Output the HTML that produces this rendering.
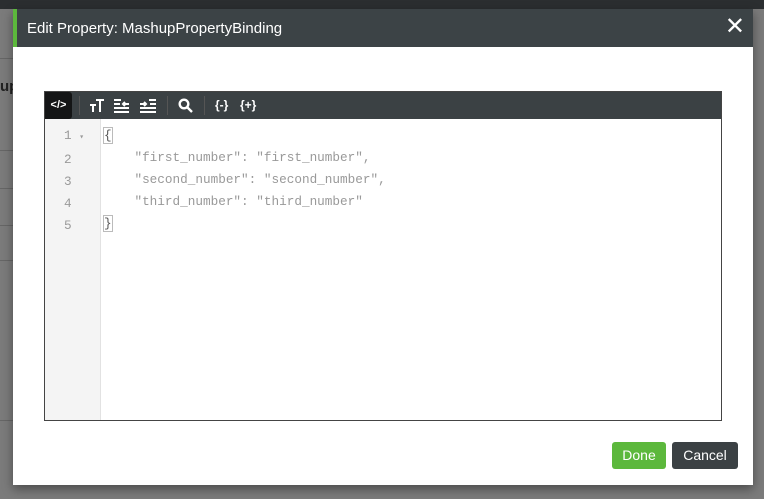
<!DOCTYPE html>
<html><head><meta charset="utf-8"><style>
*{box-sizing:border-box;margin:0;padding:0}
body{width:764px;height:499px;overflow:hidden;background:#7b7b7b;font-family:"Liberation Sans",sans-serif;position:relative}
.top{position:absolute;left:0;top:0;width:764px;height:9px;background:#2b2e30}
.line{position:absolute;left:0;width:13px;height:1px;background:#666}
.modal{position:absolute;left:13px;top:9px;width:740px;height:476px;background:#fff;box-shadow:0 4px 10px rgba(0,0,0,.4)}
.hdr{height:38px;background:#3c4346;border-left:4px solid #5cb83c;color:#fff;font-size:15px;padding:11px 0 0 10px;position:relative}
.x{position:absolute;right:8px;top:6px;font-size:24px;color:#fff;line-height:24px}
.ed{position:absolute;left:31px;top:82px;width:678px;height:330px;border:1px solid #444}
.tb{height:27px;background:#3b4144;position:relative}
.tb .a{position:absolute;left:0;top:0;width:27px;height:27px;background:#141516;border-radius:0 3px 3px 0;color:#fff;font-size:11px;font-weight:bold;text-align:center;line-height:27px}
.tb span{position:absolute;top:0;color:#fff;line-height:27px;font-size:14px;font-weight:bold}
.tb svg{position:absolute;top:6px}
.sep{position:absolute;top:4px;width:1px;height:19px;background:#555}
.gut{position:absolute;left:0;top:27px;width:56px;bottom:0;background:#f4f4f4;border-right:1px solid #e2e2e2;padding-top:6px}
.code{font-family:"Liberation Mono",monospace;font-size:12.7px;color:#9a9a9a;line-height:22px}
.gut div{padding-left:19px}
.txt{position:absolute;left:59px;top:33px;white-space:pre;color:#999}
.br{outline:1px solid #bbb;color:#555}
.btn{position:absolute;top:433px;height:27px;border-radius:3px;color:#fff;font-size:14px;text-align:center;line-height:27px}
</style></head><body>
<div class="top"></div>
<div class="line" style="top:58px"></div><div class="line" style="top:150px"></div><div class="line" style="top:188px"></div><div class="line" style="top:225px"></div><div class="line" style="top:260px"></div><div class="line" style="top:420px"></div>
<div style="position:absolute;left:0;top:78px;font-weight:bold;font-size:15px;color:#222">up</div>
<div class="modal">
<div class="hdr">Edit Property: MashupPropertyBinding<div class="x">✕</div></div>
<div class="ed">
<div class="tb">
<div class="a">&lt;/&gt;</div>
<div class="sep" style="left:34px"></div>
<svg style="left:44px" width="16" height="15" viewBox="0 0 16 15" fill="none" stroke="#fff" stroke-width="2"><path d="M1 7h6M4 7v7M7 2h8M11 2v12"/></svg>
<svg style="left:69px" width="16" height="15" viewBox="0 0 16 15" fill="none" stroke="#fff" stroke-width="2"><path d="M0 2h7M0 6h6M0 10h15M0 14h15M15 6H9M11 4l-2 2 2 2"/></svg>
<svg style="left:95px" width="16" height="15" viewBox="0 0 16 15" fill="none" stroke="#fff" stroke-width="2"><path d="M9 2h7M10 6h6M0 10h16M0 14h16M0 6h6M4 4l2 2-2 2"/></svg>
<div class="sep" style="left:122px"></div>
<svg style="left:133px" width="15" height="15" viewBox="0 0 15 15" fill="none" stroke="#fff" stroke-width="2.4"><circle cx="6" cy="6" r="4.3"/><path d="M9 9l5 5"/></svg>
<div class="sep" style="left:159px"></div>
<span style="left:170px;font-size:12px">{-}</span>
<span style="left:195px;font-size:12px">{+}</span>
</div>
<div class="gut code"><div>1 <span style="font-size:8px">▾</span></div><div>2</div><div>3</div><div>4</div><div>5</div></div>
<div class="txt code"><span class="br">{</span>
    "first_number": "first_number",
    "second_number": "second_number",
    "third_number": "third_number"
<span class="br">}</span></div>
</div>
<div class="btn" style="left:599px;width:54px;background:#5cb83c">Done</div>
<div class="btn" style="left:659px;width:66px;background:#3b4144">Cancel</div>
</div>
</body></html>
